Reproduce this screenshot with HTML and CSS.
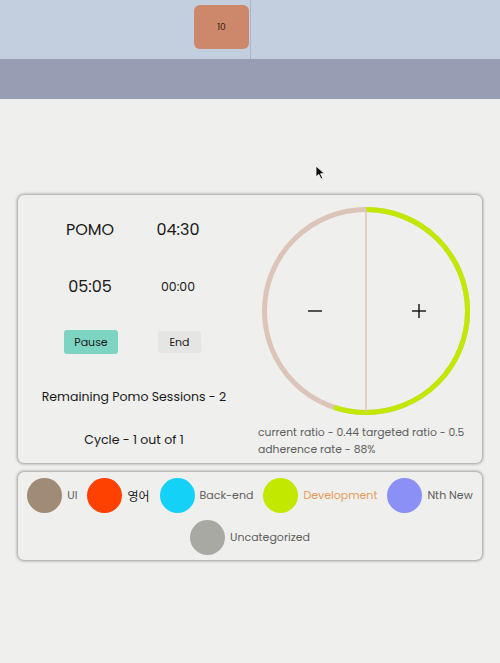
FILE: index.html
```html
<!DOCTYPE html>
<html>
<head>
<meta charset="utf-8">
<link rel="stylesheet" href="styles.css">
</head>
<body>
<div class="top">
  <div class="block">10</div>
  <div class="divider"></div>
</div>
<div class="band"></div>
<main class="content">
  <section class="card timer">
    <div class="left">
      <div class="grid">
        <div class="cell big">POMO</div>
        <div class="cell big">04:30</div>
        <div class="cell big">05:05</div>
        <div class="cell mid">00:00</div>
        <div class="cell btns"><button class="btn pause">Pause</button></div>
        <div class="cell btns"><button class="btn end">End</button></div>
      </div>
      <div class="info remaining">Remaining Pomo Sessions - 2</div>
      <div class="info cycle">Cycle - 1 out of 1</div>
    </div>
    <div class="right">
      <svg class="dial" width="210" height="210" viewBox="0 0 210 210">
        <circle cx="105" cy="105" r="101.5" fill="none" stroke="#dcc4b8" stroke-width="5"/>
        <circle cx="105" cy="105" r="101.5" fill="none" stroke="#c2e800" stroke-width="5"
          stroke-dasharray="350.8 700" transform="rotate(-90 105 105)"/>
        <line x1="105" y1="4" x2="105" y2="206" stroke="#dcc4b8" stroke-width="1.5"/>
        <line x1="47" y1="105" x2="61" y2="105" stroke="#111" stroke-width="1.4"/>
        <line x1="151" y1="105" x2="165" y2="105" stroke="#111" stroke-width="1.4"/>
        <line x1="158" y1="98" x2="158" y2="112" stroke="#111" stroke-width="1.4"/>
      </svg>
      <div class="ratio">current ratio - 0.44 targeted ratio - 0.5<br>adherence rate - 88%</div>
    </div>
  </section>
  <section class="card cats">
    <div class="cat"><span class="dot" style="background:#a08b76"></span><span class="label">UI</span></div>
    <div class="cat"><span class="dot" style="background:#ff4100"></span><span class="label ko">영어</span></div>
    <div class="cat"><span class="dot" style="background:#14d2f7"></span><span class="label">Back-end</span></div>
    <div class="cat"><span class="dot" style="background:#c2e800"></span><span class="label active">Development</span></div>
    <div class="cat"><span class="dot" style="background:#8a90f6"></span><span class="label">Nth New</span></div>
    <div class="cat"><span class="dot" style="background:#a9a9a3"></span><span class="label">Uncategorized</span></div>
  </section>
  <svg class="cursor" width="12" height="16" viewBox="0 0 12 16"><path d="M1 1 L1 12 L3.8 9.4 L6 14 L7.8 13.2 L5.6 8.8 L9.4 8.6 Z" fill="#111" stroke="#fff" stroke-width="0.8"/></svg>
</main>
</body>
</html>
```
FILE: styles.css
```css
* { box-sizing: border-box; }
html, body { margin: 0; padding: 0; }
body {
  width: 500px;
  height: 663px;
  overflow: hidden;
  background: #efefed;
  font-family: "Poppins", "Open Sans", "Noto Sans", sans-serif;
  color: #1a1a1a;
}
.top {
  position: relative;
  height: 59px;
  background: #c3cfdf;
  padding: 5px 0 0 194px;
}
.block {
  width: 55px;
  height: 44px;
  background: #cd876a;
  border-radius: 6px;
  display: flex;
  align-items: center;
  justify-content: center;
  font-size: 9px;
  color: #2a1a14;
}
.divider {
  position: absolute;
  left: 250px;
  top: 0;
  width: 1px;
  height: 59px;
  background: #a9b4c7;
}
.band {
  height: 40px;
  background: #979eb4;
}
.content {
  position: relative;
  padding: 96px 18px 0 18px;
}
.card {
  background: #efefed;
  border-radius: 6px;
  box-shadow: 0 0 3px 1px rgba(0,0,0,0.35);
}
.timer {
  display: flex;
  height: 268px;
}
.left {
  width: 232px;
}
.grid {
  display: grid;
  grid-template-columns: 88px 88px;
  grid-template-rows: 57px 57px 54px;
  padding: 6px 0 0 28px;
}
.cell {
  display: flex;
  align-items: center;
  justify-content: center;
}
.big { font-size: 16px; }
.mid { font-size: 12.5px; }
.btn {
  border: none;
  font-family: inherit;
  font-size: 11px;
  color: #1a1a1a;
  border-radius: 3px;
  height: 23px;
  padding: 0;
  margin-left: 2px;
}
.pause { width: 54px; background: #7dd4c3; height: 24px; }
.end { width: 43px; background: #e5e5e3; margin-left: 3px; height: 22px; }
.info {
  text-align: center;
  font-size: 12.5px;
}
.remaining { margin-top: 19px; }
.cycle { margin-top: 25px; }
.right {
  flex: 1;
  padding: 11px 0 0 0;
}
.dial {
  display: block;
  margin-left: 11px;
}
.ratio {
  font-size: 10.8px;
  line-height: 17px;
  color: #5e5e5e;
  margin-top: 8px;
  margin-left: 8px;
}
.cats {
  margin-top: 9px;
  height: 88px;
  display: flex;
  flex-wrap: wrap;
  justify-content: center;
  align-content: flex-start;
  padding: 6px 0 0 0;
  column-gap: 10px;
  row-gap: 7px;
}
.cat {
  display: flex;
  align-items: center;
  gap: 5px;
}
.dot {
  width: 35px;
  height: 35px;
  border-radius: 50%;
  display: block;
}
.label {
  font-size: 11px;
  color: #5e5e5e;
}
.label.ko {
  font-family: "Noto Sans CJK KR", sans-serif;
  font-size: 12px;
  color: #1a1a1a;
}
.label.active { color: #e89a5c; }
.cursor {
  position: absolute;
  left: 315px;
  top: 66px;
}
```
